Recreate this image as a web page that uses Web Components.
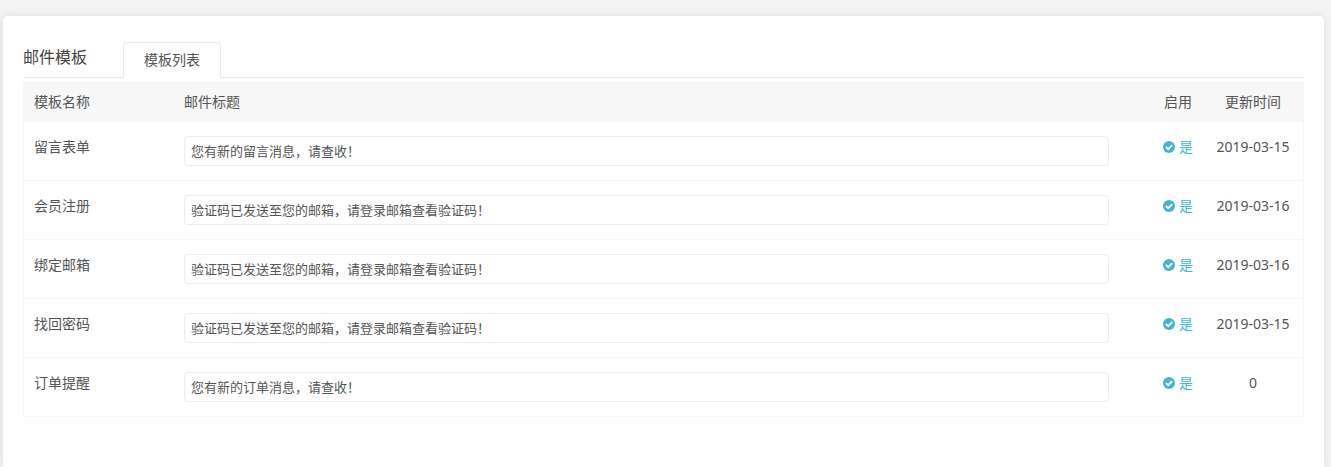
<!DOCTYPE html>
<html lang="zh-CN">
<head>
<meta charset="utf-8">
<title>邮件模板</title>
<style>
  html { min-height: 100%; background: #f3f3f3; }
  body {
    margin: 0; min-height: 100vh; box-sizing: border-box; padding: 16px 7px 0 3px;
    display: flex; flex-direction: column; overflow: hidden;
    font: 400 14px/22px "Noto Sans", "Noto Sans CJK SC", sans-serif; color: #555;
  }
</style>
</head>
<body>
<panel-card>
  <tab-header>
    <span slot="title">邮件模板</span>
    <span slot="tab">模板列表</span>
  </tab-header>
  <template-table></template-table>
</panel-card>
<script>
class PanelCard extends HTMLElement {
  constructor() {
    super();
    this.attachShadow({ mode: "open" }).innerHTML = `
      <style>
        :host { display: block; flex: 1; padding: 26px 20px 48px; background: #fff;
          border-radius: 5px 5px 0 0; box-shadow: 0 0 8px rgba(0,0,0,.1); }
      </style>
      <slot></slot>`;
  }
}
customElements.define("panel-card", PanelCard);

class TabHeader extends HTMLElement {
  constructor() {
    super();
    this.attachShadow({ mode: "open" }).innerHTML = `
      <style>
        :host { display: block; margin-bottom: 4px; }
        header { display: flex; align-items: flex-start; height: 35px; border-bottom: 1px solid #e9e9e9; }
        h1 { box-sizing: border-box; width: 100px; margin: 0; padding-top: 4px;
          font-size: 16px; line-height: 22px; font-weight: 400; color: #444; }
        button { box-sizing: border-box; height: 36px; padding: 0 20px 2px; font: inherit; color: #555;
          background: #fff; border: 1px solid #e9e9e9; border-bottom: 0; border-radius: 4px 4px 0 0; }
      </style>
      <header>
        <h1><slot name="title"></slot></h1>
        <button type="button"><slot name="tab"></slot></button>
      </header>`;
  }
}
customElements.define("tab-header", TabHeader);

class StatusLink extends HTMLElement {
  constructor() {
    super();
    this.attachShadow({ mode: "open" }).innerHTML = `
      <style>
        :host { display: block; }
        a { display: flex; align-items: center; justify-content: center; gap: 4px;
          color: #45b8d0; text-decoration: none; }
        svg { width: 12px; height: 12px; flex: none; }
      </style>
      <a href="#">
        <svg viewBox="0 0 12 12" aria-hidden="true">
          <circle cx="6" cy="6" r="6" fill="#45b4cd"/>
          <path d="M2.9 5.9 5.2 8.2 9.2 4.2" fill="none" stroke="#fff" stroke-width="1.8"/>
        </svg>
        <slot></slot>
      </a>`;
  }
}
customElements.define("status-link", StatusLink);

const templates = [
  ["留言表单", "您有新的留言消息，请查收！", "2019-03-15"],
  ["会员注册", "验证码已发送至您的邮箱，请登录邮箱查看验证码！", "2019-03-16"],
  ["绑定邮箱", "验证码已发送至您的邮箱，请登录邮箱查看验证码！", "2019-03-16"],
  ["找回密码", "验证码已发送至您的邮箱，请登录邮箱查看验证码！", "2019-03-15"],
  ["订单提醒", "您有新的订单消息，请查收！", "0"]
];

class TemplateTable extends HTMLElement {
  constructor() {
    super();
    const rows = templates.map(([name, subject, date], i) => `
      <tr>
        <td><label for="subject${i}">${name}</label></td>
        <td class="subject"><input id="subject${i}" type="text" value="${subject}"></td>
        <td class="mid"><status-link>是</status-link></td>
        <td class="mid">${date}</td>
      </tr>`).join("");
    this.attachShadow({ mode: "open" }).innerHTML = `
      <style>
        :host { display: block; border: solid #f6f6f6; border-width: 0 1px; }
        table { width: 100%; table-layout: fixed; border-collapse: separate; border-spacing: 0; }
        .name { width: 150px; }
        .enabled { width: 50px; }
        .updated { width: 100px; }
        th, td { box-sizing: border-box; text-align: left; font-weight: 400; }
        th { height: 40px; padding: 0 10px; background: #f7f7f7; }
        td { padding: 14px 10px; vertical-align: top; border-bottom: 1px solid #f6f6f6; }
        .mid { padding-left: 0; padding-right: 0; text-align: center; }
        .subject { padding-right: 44px; }
        input { display: block; box-sizing: border-box; width: 100%; height: 30px; padding: 0 6px 2px;
          font: inherit; font-size: 13px; color: #555; background: #fff;
          border: 1px solid #ececec; border-radius: 4px; outline: 0; }
      </style>
      <table>
        <colgroup><col class="name"><col><col class="enabled"><col class="updated"></colgroup>
        <thead><tr>
          <th scope="col">模板名称</th><th scope="col">邮件标题</th>
          <th scope="col" class="mid">启用</th><th scope="col" class="mid">更新时间</th>
        </tr></thead>
        <tbody>${rows}</tbody>
      </table>`;
  }
}
customElements.define("template-table", TemplateTable);
</script>
</body>
</html>
